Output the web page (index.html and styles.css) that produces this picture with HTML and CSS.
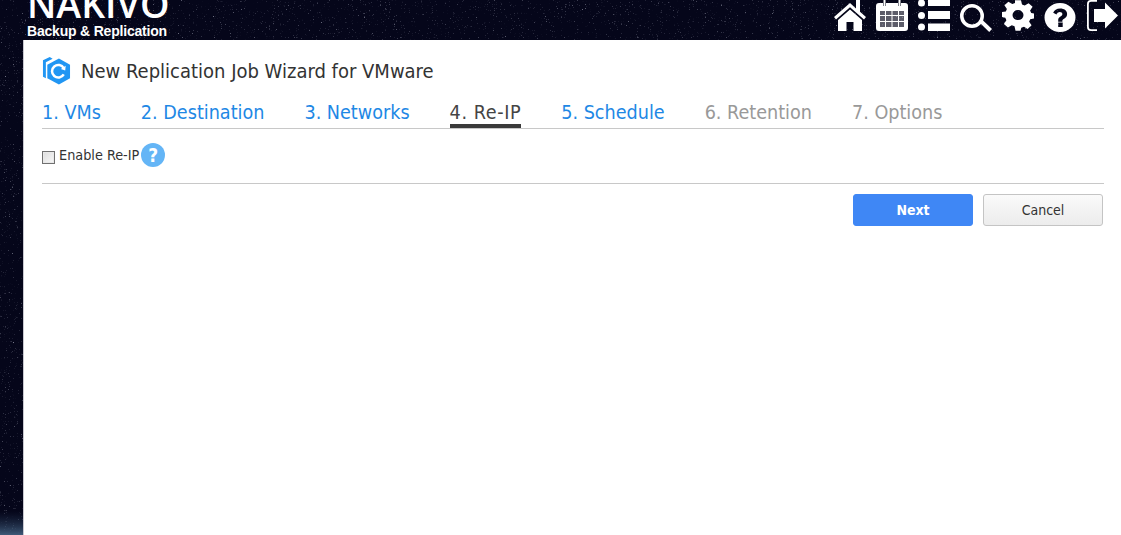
FILE: index.html
```html
<!DOCTYPE html>
<html lang="en">
<head>
<meta charset="utf-8">
<title>New Replication Job Wizard for VMware</title>
<link rel="stylesheet" href="styles.css">
</head>
<body>
<svg class="sky" aria-hidden="true">
  <defs>
    <filter id="stars" x="0" y="0" width="100%" height="100%">
      <feTurbulence type="fractalNoise" baseFrequency="0.75" numOctaves="2" seed="7"/>
      <feColorMatrix type="matrix" values="0 0 0 0 .8  0 0 0 0 .82  0 0 0 0 .95  2.400 2.400 0 0 -2.950"/>
    </filter>
    <linearGradient id="glow" x1="0" y1="0" x2="0" y2="1">
      <stop offset=".955" stop-color="#1c2c48" stop-opacity="0"/>
      <stop offset="1" stop-color="#3f5a78"/>
    </linearGradient>
  </defs>
  <rect width="100%" height="100%" filter="url(#stars)" opacity=".5"/>
  <rect width="100%" height="100%" fill="url(#glow)"/>
</svg>
<header class="topbar">
  <div class="logo">
    <div class="logo-name">NAKIVO</div>
    <div class="logo-sub">Backup &amp; Replication</div>
  </div>
  <nav class="tools">
    <svg class="tool" viewBox="0 0 32 32"><path d="M16 3 0 17l2 2.400L16 7.200l14 12.200 2-2.400-6-5.300V0h-4v8.500z"/><path d="M16 9.500 4 20v11h8.500v-9h7v9H28V20z"/></svg>
    <svg class="tool" viewBox="0 0 32 32"><path d="M4 10h24v18H4z" opacity=".35"/><path fill-rule="evenodd" d="M3 3h4v3h3V3h12v3h3V3h4a3 3 0 0 1 3 3v22a3 3 0 0 1-3 3H3a3 3 0 0 1-3-3V6a3 3 0 0 1 3-3zM4 11v4h5v-4zm6 0v4h5.500v-4zm6.500 0v4H22v-4zm6.500 0v4h5v-4zM4 16v5h5v-5zm6 0v5h5.500v-5zm6.500 0v5H22v-5zm6.500 0v5h5v-5zM4 22v5h5v-5zm6 0v5h5.500v-5zm6.500 0v5H22v-5zm6.500 0v5h5v-5zM7.500 0h2v6h-2zm15 0h2v6h-2z"/></svg>
    <svg class="tool" viewBox="0 0 32 32"><circle cx="3.500" cy="3" r="3.500"/><circle cx="3.500" cy="15.500" r="3.500"/><circle cx="3.500" cy="27" r="3.500"/><path d="M10 -2h22v8H10zM10 11h22v8H10zM10 23.500h22v7.500H10z"/></svg>
    <svg class="tool" viewBox="0 0 32 32"><path fill-rule="evenodd" d="M12 4a12 12 0 1 1 0 24 12 12 0 0 1 0-24zm0 3.500a8.500 8.500 0 1 0 0 17 8.500 8.500 0 0 0 0-17z"/><path d="m20 23 2.800-2.800L32 29l-2.800 3z"/></svg>
    <svg class="tool" viewBox="0 0 32 32"><path fill-rule="evenodd" d="M13 2h6l1 4.500 2.700 1.100 3.900-2.500 4 4-2.500 3.900 1.100 2.700L33 16.500v5l-4.800 1-1.100 2.700 2.500 3.900-4 4-3.600-2.500-2.700 1.100L18.500 35h-5l-1-4.800-2.700-1.100-3.900 2.500-4-4 2.500-3.900-1.100-2.700L-1 20v-5l4.800-1 1.100-2.700-2.500-3.900 4-4 3.900 2.500 2.700-1.100zM16 12.500a5.500 5.500 0 1 0 0 11 5.500 5.500 0 0 0 0-11z" transform="translate(0 -1.500) scale(1 .92)"/></svg>
    <svg class="tool" viewBox="0 0 32 32"><path fill-rule="evenodd" d="M16 3a15.500 14.500 0 1 1 0 29 15.500 14.500 0 0 1 0-29zm-1.800 19.500v4.500h4.500v-4.500zm2-14c-3.600 0-6 1.700-7 4.300l3.300 1.700c.6-1.500 1.700-2.400 3.300-2.400 1.500 0 2.600.8 2.600 2 0 1.100-.8 1.800-2.200 2.700-1.600 1-2 2-2 3.800v1.200h4.200v-.9c0-1 .4-1.400 1.700-2.200 2-1.200 3-2.700 3-4.800 0-3.200-2.900-5.400-6.900-5.400z"/></svg>
    <svg class="tool" viewBox="0 0 32 32"><path d="M11 0H5a4 4 0 0 0-4 4v23a4 4 0 0 0 4 4h6v-1.800H5A2.200 2.200 0 0 1 2.800 27V4A2.200 2.200 0 0 1 5 1.800h6z"/><path d="M19 2.500 32 15.500 19 28.500V22H8V9h11z"/></svg>
  </nav>
</header>
<main class="panel">
  <div class="title-row">
    <svg class="job-icon" viewBox="0 0 30 30"><path d="M8 .5 1 4v17l3 1.500V6l7-3.800z" fill="#2196f3"/><path d="M17.500 2 5.500 8.500v14l12 6.500 11.500-6.500v-14z" fill="#2196f3"/><path d="M22.500 18.500a6.500 6.500 0 1 1 0-6.500" fill="none" stroke="#fff" stroke-width="2.600"/><path d="m24.500 9.500-.5 5-4.500-1.500z" fill="#fff"/></svg>
    <h1 class="title">New Replication Job Wizard for VMware</h1>
  </div>
  <div class="tabs">
    <a class="tab">1. VMs</a>
    <a class="tab">2. Destination</a>
    <a class="tab">3. Networks</a>
    <a class="tab active">4. Re-IP</a>
    <a class="tab">5. Schedule</a>
    <a class="tab disabled">6. Retention</a>
    <a class="tab disabled">7. Options</a>
  </div>
  <div class="option-row">
    <span class="check"></span>
    <span class="option-label">Enable Re-IP</span>
    <span class="help">?</span>
  </div>
  <div class="actions">
    <button class="btn primary">Next</button>
    <button class="btn">Cancel</button>
  </div>
</main>
</body>
</html>
```
FILE: styles.css
```css
* { box-sizing: border-box; }
html, body { margin: 0; height: 100%; overflow: hidden; }
body {
  display: flex;
  flex-direction: column;
  font-family: "DejaVu Sans", sans-serif;
  font-stretch: condensed;
  background-color: #05061a;
}
.sky { position: absolute; left: 0; top: 0; width: 100%; height: 100%; }
.topbar {
  position: relative;
  height: 40px;
  flex: none;
  display: flex;
  justify-content: space-between;
  padding: 0 3px 0 27px;
  overflow: hidden;
  color: #fff;
}
.logo { width: 142px; font-stretch: normal; }
.logo-name {
  font-family: "Open Sans", sans-serif;
  font-weight: 600;
  font-size: 37.500px;
  line-height: 30px;
  margin-top: -11px;
  white-space: nowrap;
}
.logo-sub {
  font-family: "Liberation Sans", sans-serif;
  font-weight: 700;
  font-size: 14px;
  line-height: 16px;
  margin-top: 4px;
  letter-spacing: -.2px;
  white-space: nowrap;
}
.tools { display: flex; gap: 10px; }
.tool { width: 32px; height: 32px; fill: #fff; overflow: hidden; }
.panel {
  position: relative;
  flex: 1;
  margin-left: 23px;
  padding: 15px 17px 0 18px;
  background: #fff;
  border-left: 1px solid #c8c8d0;
}
.title-row { display: flex; align-items: center; gap: 10px; height: 31px; }
.job-icon { width: 29px; height: 30px; flex: none; }
.title { margin: 0; font-size: 20px; font-weight: 400; color: #333; }
.tabs {
  display: flex;
  gap: 40px;
  height: 42px;
  margin-top: 1px;
  padding-top: 14px;
  border-bottom: 1px solid #c8c8c8;
}
.tab {
  font-size: 19.600px;
  line-height: 24px;
  height: 27px;
  color: #1e88e5;
  white-space: nowrap;
}
.tab.active { color: #444; border-bottom: 4px solid #3a3a3a; letter-spacing: .6px; }
.tab.disabled { color: #999; }
.option-row {
  display: flex;
  align-items: center;
  height: 55px;
  padding-bottom: 2px;
  border-bottom: 1px solid #c8c8c8;
}
.check {
  width: 13px;
  height: 13px;
  margin: 4px 4px 0 0;
  border: 1px solid #707070;
  background: linear-gradient(135deg, #dcdcdc, #f8f8f8);
  box-shadow: inset 0 0 0 1px #e8e8e8;
}
.option-label { font-size: 14.300px; color: #333; }
.help {
  width: 24px;
  height: 24px;
  margin-left: 2px;
  border-radius: 50%;
  background: #64b5f6;
  color: #fff;
  font-weight: 700;
  font-size: 19px;
  line-height: 24px;
  text-align: center;
}
.actions {
  display: flex;
  justify-content: flex-end;
  gap: 10px;
  margin-top: 10px;
  padding-right: 1px;
}
.btn {
  width: 120px;
  height: 32px;
  padding: 0;
  border: 1px solid #c4c4c4;
  border-radius: 3px;
  background: linear-gradient(#fafafa, #ececec);
  color: #333;
  font-family: "DejaVu Sans", sans-serif;
  font-stretch: condensed;
  font-size: 14px;
}
.btn.primary {
  border-color: #3f87f5;
  background: #3f87f5;
  color: #fff;
  font-weight: 700;
}
```
